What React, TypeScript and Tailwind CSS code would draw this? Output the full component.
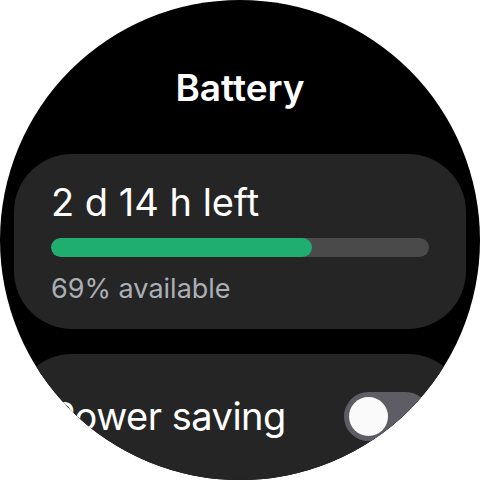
export default function App() {
    return (
        <div className="w-[480px] h-[480px] bg-white">
            <div
                className="w-[480px] h-[480px] rounded-full overflow-hidden bg-black flex flex-col text-white"
                style={{fontFamily: "Inter, 'Noto Sans', sans-serif"}}
            >
                <h1 className="pt-[70px] h-[106px] text-[37px] leading-[36px] font-semibold text-center mb-[48px]">
                    Battery
                </h1>

                <div className="mx-[14px] h-[175px] rounded-[58px] bg-[#252525] px-[37px] pt-[29px] flex flex-col shrink-0">
                    <p className="text-[38px] leading-[38px]">2 d 14 h left</p>
                    <div className="mt-[17px] h-[19px] rounded-full bg-[#4a4a4a] overflow-hidden">
                        <div className="h-full w-[69%] rounded-full bg-[#1fae6f]"/>
                    </div>
                    <p className="mt-[18px] text-[27px] leading-[28px] text-[#aab0b6]">69% available</p>
                </div>

                <div className="mx-[14px] mt-[25px] h-[175px] rounded-[58px] bg-[#252525] px-[37px] pt-[38px] flex items-start justify-between shrink-0">
                    <p className="text-[38px] leading-[48px] tracking-[-0.5px]">Power saving</p>
                    <div className="w-[86px] h-[49px] rounded-full bg-[#5e5d65] p-[5px] mr-[-1px]">
                        <div className="w-[39px] h-[39px] rounded-full bg-[#fafafa]"/>
                    </div>
                </div>
            </div>
        </div>
    );
}
